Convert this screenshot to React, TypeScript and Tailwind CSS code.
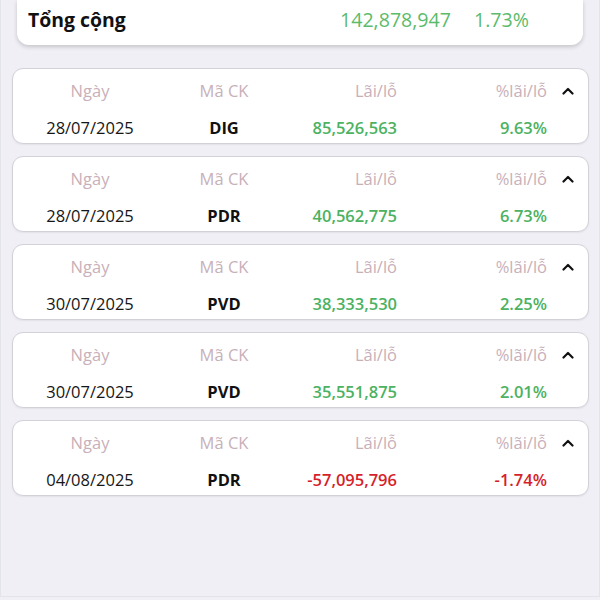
import React from "react";

type Row = { date: string; code: string; pl: string; pct: string; neg?: boolean };

const rows: Row[] = [
  { date: "28/07/2025", code: "DIG", pl: "85,526,563", pct: "9.63%" },
  { date: "28/07/2025", code: "PDR", pl: "40,562,775", pct: "6.73%" },
  { date: "30/07/2025", code: "PVD", pl: "38,333,530", pct: "2.25%" },
  { date: "30/07/2025", code: "PVD", pl: "35,551,875", pct: "2.01%" },
  { date: "04/08/2025", code: "PDR", pl: "-57,095,796", pct: "-1.74%", neg: true },
];

function Chevron() {
  return (
    <svg width="12" height="8" viewBox="0 0 12 8" fill="none">
      <polyline points="1.5,6.5 6,2 10.5,6.5" stroke="#111" strokeWidth="2.2" strokeLinecap="round" strokeLinejoin="round" />
    </svg>
  );
}

function Card({ r }: { r: Row }) {
  const color = r.neg ? "text-[#d61f2a]" : "text-[#4cb261]";
  return (
    <div className="mx-[11px] w-[577px] h-[76px] rounded-[11px] border border-[#d2d2d9] bg-white pl-[11px] pt-[10px] shadow-[0_1px_2px_rgba(0,0,0,0.06)]">
      <div className="grid grid-cols-[132px_136px_105px_150px_42px] h-6 items-center text-[16.5px] text-[#c8b0b9]">
        <div className="text-center">Ngày</div>
        <div className="text-center">Mã CK</div>
        <div className="text-right">Lãi/lỗ</div>
        <div className="text-right">%lãi/lỗ</div>
        <div className="flex justify-center"><Chevron /></div>
      </div>
      <div className="mt-[13px] grid grid-cols-[132px_136px_105px_150px_42px] h-6 items-center text-[16.5px]">
        <div className="text-center text-[#161616]">{r.date}</div>
        <div className="text-center font-bold text-[#111]">{r.code}</div>
        <div className={`text-right font-semibold ${color}`}>{r.pl}</div>
        <div className={`text-right font-semibold ${color}`}>{r.pct}</div>
        <div />
      </div>
    </div>
  );
}

export default function App() {
  return (
    <div className="w-[600px] h-[600px] bg-[#f0eff5] overflow-hidden" style={{ fontFamily: '"Open Sans", "Noto Sans", sans-serif' }}>
      <div className="w-[600px] h-[597px] border-x border-b border-[#e3e3ea] box-border">
        <div className="mx-[16px] w-[566px] h-[45px] rounded-b-[12px] bg-white shadow-[0_2px_4px_rgba(0,0,0,0.18)] flex items-center pl-[11px] pb-[5px]">
          <div className="w-[312px] text-[19.4px] font-bold text-[#111]">Tổng cộng</div>
          <div className="w-[111px] text-[19.6px] font-medium text-[#5cbb6b]">142,878,947</div>
          <div className="ml-[23px] text-[19.6px] font-medium text-[#5cbb6b]">1.73%</div>
        </div>
        <div className="mt-[23px] flex flex-col gap-[12px]">
          {rows.map((r, i) => (
            <Card key={i} r={r} />
          ))}
        </div>
      </div>
    </div>
  );
}
